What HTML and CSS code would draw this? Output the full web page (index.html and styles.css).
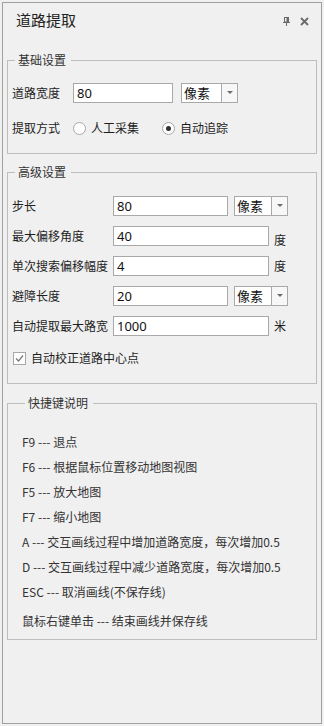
FILE: index.html
```html
<!DOCTYPE html>
<html lang="zh-CN">
<head>
    <meta charset="UTF-8">
    <title>道路提取</title>
    <link rel="stylesheet" href="styles.css">
</head>
<body>
    <div class="panel">
        <!-- Title bar -->
        <div class="panel-header">
            <span class="panel-title">道路提取</span>
            <div class="panel-tools">
                <svg class="tool-icon" width="7" height="9" viewBox="0 0 7 9">
                    <rect x="1.5" y="0.5" width="4" height="4.5" fill="none" stroke="#6a6a6a"/>
                    <rect x="0" y="5" width="7" height="1" fill="#6a6a6a"/>
                    <rect x="3" y="6" width="1" height="3" fill="#6a6a6a"/>
                    <rect x="3.5" y="1" width="1.5" height="4" fill="#6a6a6a"/>
                </svg>
                <svg class="tool-icon" width="9" height="9" viewBox="0 0 9 9">
                    <path d="M1 1 L8 8 M8 1 L1 8" stroke="#6a6a6a" stroke-width="1.8"/>
                </svg>
            </div>
        </div>

        <!-- Basic settings -->
        <fieldset class="group group-basic">
            <legend>基础设置</legend>
            <div class="row">
                <label class="label label-basic">道路宽度</label>
                <input class="text-input input-basic" type="text" value="80">
                <div class="select select-basic">
                    <span class="select-text">像素</span>
                    <span class="select-arrow"></span>
                </div>
            </div>
            <div class="row row-radio">
                <label class="label label-basic">提取方式</label>
                <label class="option">
                    <span class="radio"></span>人工采集
                </label>
                <label class="option">
                    <span class="radio checked"></span>自动追踪
                </label>
            </div>
        </fieldset>

        <!-- Advanced settings -->
        <fieldset class="group group-advanced">
            <legend>高级设置</legend>
            <div class="row row-first">
                <label class="label label-adv">步长</label>
                <input class="text-input input-short" type="text" value="80">
                <div class="select select-adv">
                    <span class="select-text">像素</span>
                    <span class="select-arrow"></span>
                </div>
            </div>
            <div class="row">
                <label class="label label-adv">最大偏移角度</label>
                <input class="text-input input-long" type="text" value="40">
                <span class="unit unit-low">度</span>
            </div>
            <div class="row">
                <label class="label label-adv">单次搜索偏移幅度</label>
                <input class="text-input input-long" type="text" value="4">
                <span class="unit">度</span>
            </div>
            <div class="row">
                <label class="label label-adv">避障长度</label>
                <input class="text-input input-short" type="text" value="20">
                <div class="select select-adv">
                    <span class="select-text">像素</span>
                    <span class="select-arrow"></span>
                </div>
            </div>
            <div class="row">
                <label class="label label-adv">自动提取最大路宽</label>
                <input class="text-input input-long" type="text" value="1000">
                <span class="unit">米</span>
            </div>
            <label class="check-row">
                <span class="checkbox">
                    <svg width="11" height="11" viewBox="0 0 11 11">
                        <path d="M2 5.5 L4.5 8 L9 2.5" fill="none" stroke="#7a7a7a" stroke-width="1.3"/>
                    </svg>
                </span>
                自动校正道路中心点
            </label>
        </fieldset>

        <!-- Shortcut keys -->
        <fieldset class="group group-keys">
            <legend>快捷键说明</legend>
            <p class="key-line">F9 --- 退点</p>
            <p class="key-line">F6 --- 根据鼠标位置移动地图视图</p>
            <p class="key-line">F5 --- 放大地图</p>
            <p class="key-line">F7 --- 缩小地图</p>
            <p class="key-line">A --- 交互画线过程中增加道路宽度，每次增加0.5</p>
            <p class="key-line">D --- 交互画线过程中减少道路宽度，每次增加0.5</p>
            <p class="key-line">ESC --- 取消画线(不保存线)</p>
            <p class="key-line key-last">鼠标右键单击 --- 结束画线并保存线</p>
        </fieldset>
    </div>
</body>
</html>
```

FILE: styles.css
```css
/* General */
body {
  margin: 2px;
  background-color: #f0f0f0;
  font-family: "Noto Sans CJK SC", "Noto Sans", sans-serif;
  font-size: 12px;
  color: #1e1e1e;
}

.panel {
  box-sizing: border-box;
  width: 320px;
  height: 722px;
  border: 1px solid #a0a0a0;
  background-color: #f0f0f0;
}

/* Title bar */
.panel-header {
  box-sizing: border-box;
  height: 49px;
  padding: 5px 12px 0 13px;
  display: flex;
  justify-content: space-between;
  align-items: flex-start;
}

.panel-title {
  font-size: 15px;
  line-height: 24px;
  color: #222;
}

.panel-tools {
  display: flex;
  align-items: center;
  gap: 10px;
  height: 24px;
  padding-top: 1px;
}

.tool-icon {
  display: block;
}

/* Group boxes */
.group {
  margin: 0 4px;
  border: 1px solid #bdbdbd;
  padding: 15px 4px 15px 4px;
  min-width: 0;
}

.group legend {
  margin-left: 3px;
  padding: 0 5px 0 3px;
  line-height: 16px;
  color: #333;
}

.group-advanced {
  margin-top: 10px;
  padding-top: 16px;
  padding-bottom: 17px;
}

.group-keys {
  margin-top: 11px;
  padding: 18px 4px 6px 14px;
}

/* Rows */
.row {
  display: flex;
  align-items: center;
  height: 20px;
}

.row + .row {
  margin-top: 10px;
}

.row-radio {
  margin-top: 15px !important;
}

.row-first {
  margin-bottom: 6px;
}

.label {
  flex: none;
  white-space: nowrap;
  line-height: 16px;
}

.label-basic {
  width: 61px;
}

.label-adv {
  width: 101px;
}

/* Inputs */
.text-input {
  box-sizing: border-box;
  height: 20px;
  margin: 0;
  padding: 0 3px;
  border: 1px solid #a9a9a9;
  background-color: #fff;
  font-family: "Noto Sans", "Noto Sans CJK SC", sans-serif;
  font-size: 13px;
  color: #111;
  outline: none;
}

.input-basic {
  width: 100px;
}

.input-short {
  width: 115px;
}

.input-long {
  width: 156px;
}

.select {
  box-sizing: border-box;
  height: 20px;
  display: flex;
  border: 1px solid #a9a9a9;
  background-color: #fff;
}

.select-basic {
  width: 57px;
  margin-left: 8px;
}

.select-adv {
  width: 54px;
  margin-left: 6px;
}

.select-text {
  flex: 1;
  padding-left: 2px;
  font-size: 13px;
  line-height: 18px;
  color: #111;
}

.select-arrow {
  position: relative;
  width: 15px;
  border-left: 1px solid #a9a9a9;
  background-color: #f7f7f7;
}

.select-arrow::after {
  content: "";
  position: absolute;
  left: 5px;
  top: 7px;
  border-left: 3px solid transparent;
  border-right: 3px solid transparent;
  border-top: 3px solid #6d6d6d;
}

.unit {
  margin-left: 5px;
  line-height: 16px;
}

.unit-low {
  align-self: flex-end;
  margin-bottom: -2px;
}

/* Radio buttons */
.option {
  display: flex;
  align-items: center;
  gap: 5px;
  margin-right: 23px;
  line-height: 16px;
}

.radio {
  box-sizing: border-box;
  width: 13px;
  height: 13px;
  border: 1px solid #a8a8a8;
  border-radius: 50%;
  background-color: #fff;
  position: relative;
}

.radio.checked::after {
  content: "";
  position: absolute;
  left: 3px;
  top: 3px;
  width: 5px;
  height: 5px;
  border-radius: 50%;
  background-color: #333;
}

/* Checkbox */
.check-row {
  display: flex;
  align-items: center;
  gap: 5px;
  margin-top: 14px;
  margin-left: 1px;
  line-height: 16px;
}

.checkbox {
  box-sizing: border-box;
  width: 13px;
  height: 13px;
  border: 1px solid #a8a8a8;
  background-color: #fff;
  display: flex;
  align-items: center;
  justify-content: center;
}

.checkbox svg {
  display: block;
}

/* Shortcut lines */
.key-line {
  margin: 0;
  line-height: 25px;
  color: #333;
  white-space: nowrap;
}

.key-last {
  margin-top: 4px;
}
```
